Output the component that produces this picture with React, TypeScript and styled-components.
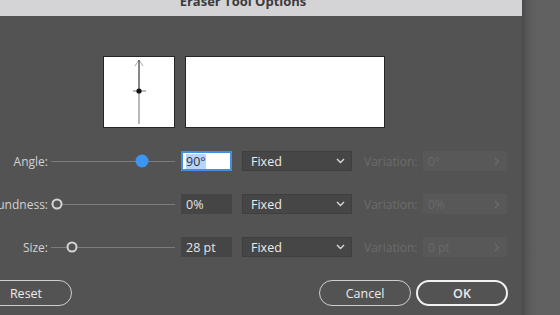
import React from 'react';
import styled, { createGlobalStyle } from 'styled-components';

const GlobalStyle = createGlobalStyle`
    html, body {
        margin: 0;
        padding: 0;
        width: 560px;
        height: 315px;
        overflow: hidden;
        background: #616161;
        font-family: "Open Sans", "Liberation Sans", sans-serif;
    }
`;

type SliderRow = {
    label: string;
    value: string;
    thumb: number;
    active?: boolean;
    variation: string;
};

const rows: SliderRow[] = [
    { label: 'Angle:', value: '90°', thumb: 91, active: true, variation: '0°' },
    { label: 'Roundness:', value: '0%', thumb: 6, variation: '0%' },
    { label: 'Size:', value: '28 pt', thumb: 21, variation: '0 pt' },
];

const BrushPreview = () => (
    <svg width="70" height="70" viewBox="0 0 70 70">
        <path d="M31 9 L35 3 L39 9" fill="none" stroke="#a8a8a8" strokeWidth="1" />
        <line x1="35" y1="3" x2="35" y2="34" stroke="#555" strokeWidth="1.4" />
        <line x1="35" y1="34" x2="35" y2="67" stroke="#8a8a8a" strokeWidth="1.2" />
        <line x1="29" y1="34" x2="42" y2="34" stroke="#777" strokeWidth="1" />
        <circle cx="35" cy="34" r="2.6" fill="#111" />
    </svg>
);

const Chevron = ({ color }: { color: string }) => (
    <svg width="9" height="6" viewBox="0 0 9 6">
        <path d="M1 1 L4.5 4.5 L8 1" fill="none" stroke={color} strokeWidth="1.4" />
    </svg>
);

const RightChevron = () => (
    <svg width="6" height="9" viewBox="0 0 6 9">
        <path d="M1 1 L4.5 4.5 L1 8" fill="none" stroke="#6c6c6c" strokeWidth="1.2" />
    </svg>
);

export default function App() {
    return (
        <>
            <GlobalStyle />
            <Screen>
                <Dialog>
                    <TitleBar>
                        <Title>Eraser Tool Options</Title>
                    </TitleBar>
                    <Body>
                        <PreviewRow>
                            <PreviewBox>
                                <BrushPreview />
                            </PreviewBox>
                            <StrokeBox />
                        </PreviewRow>
                        <Fields>
                            {rows.map((row) => (
                                <Row key={row.label}>
                                    <Label>{row.label}</Label>
                                    <Slider>
                                        <Track />
                                        <Thumb $active={row.active} style={{ left: row.thumb }} />
                                    </Slider>
                                    <ValueInput $focused={row.active}>
                                        <ValueText $selected={row.active}>{row.value}</ValueText>
                                    </ValueInput>
                                    <Select>
                                        <span>Fixed</span>
                                        <Chevron color="#d8d8d8" />
                                    </Select>
                                    <VariationLabel>Variation:</VariationLabel>
                                    <VariationInput>
                                        <span>{row.variation}</span>
                                        <RightChevron />
                                    </VariationInput>
                                </Row>
                            ))}
                        </Fields>
                        <Footer>
                            <Button>Reset</Button>
                            <ButtonGroup>
                                <Button>Cancel</Button>
                                <Button $primary>OK</Button>
                            </ButtonGroup>
                        </Footer>
                    </Body>
                </Dialog>
                <Backdrop />
            </Screen>
        </>
    );
}

const Screen = styled.div`
    display: flex;
    width: 560px;
    height: 315px;
    overflow: hidden;
`;

const Dialog = styled.div`
    flex: none;
    margin-left: -36px;
    width: 558px;
    height: 315px;
    display: flex;
    flex-direction: column;
    background: #535353;
`;

const Backdrop = styled.div`
    flex: 1;
    background: linear-gradient(to right, #4a4a4a 0px, #575757 5px, #5e5e5e 11px, #616161 16px);
`;

const TitleBar = styled.div`
    height: 16px;
    flex: none;
    overflow: hidden;
    background: #d4d3d6;
    display: flex;
    justify-content: center;
`;

const Title = styled.div`
    margin-top: -7px;
    font-size: 13px;
    line-height: 16px;
    font-weight: 700;
    color: #3c3c3c;
`;

const Body = styled.div`
    flex: 1;
    display: flex;
    flex-direction: column;
    padding-top: 40px;
`;

const PreviewRow = styled.div`
    display: flex;
    gap: 10px;
    margin-left: 139px;
`;

const PreviewBox = styled.div`
    width: 70px;
    height: 70px;
    background: #fff;
    border: 1px solid #262626;
    display: flex;
`;

const StrokeBox = styled.div`
    width: 198px;
    height: 70px;
    background: #fff;
    border: 1px solid #262626;
`;

const Fields = styled.div`
    display: flex;
    flex-direction: column;
    gap: 23px;
    margin-top: 23px;
`;

const Row = styled.div`
    display: flex;
    align-items: center;
    height: 20px;
`;

const Label = styled.div`
    width: 84px;
    text-align: right;
    white-space: nowrap;
    font-size: 12px;
    color: #d2d2d2;
`;

const Slider = styled.div`
    position: relative;
    width: 124px;
    height: 14px;
    margin-left: 3px;
    display: flex;
    align-items: center;
`;

const Track = styled.div`
    width: 100%;
    height: 1px;
    background: #7c7c7c;
`;

const Thumb = styled.div<{ $active?: boolean }>`
    position: absolute;
    top: 50%;
    width: ${(p) => (p.$active ? '13px' : '11px')};
    height: ${(p) => (p.$active ? '13px' : '11px')};
    box-sizing: border-box;
    border-radius: 50%;
    transform: translate(-50%, -50%);
    background: ${(p) => (p.$active ? '#3b96f3' : '#535353')};
    border: ${(p) => (p.$active ? 'none' : '2px solid #d4d4d4')};
`;

const ValueInput = styled.div<{ $focused?: boolean }>`
    box-sizing: border-box;
    width: 51px;
    height: 20px;
    margin-left: 6px;
    padding-left: ${(p) => (p.$focused ? '3px' : '5px')};
    display: flex;
    align-items: center;
    background: ${(p) => (p.$focused ? '#ffffff' : '#454545')};
    border: ${(p) => (p.$focused ? '2px solid #3f8fe6' : 'none')};
    font-size: 12.5px;
    color: #e4e4e4;
`;

const ValueText = styled.span<{ $selected?: boolean }>`
    line-height: 15px;
    color: ${(p) => (p.$selected ? '#333' : '#e4e4e4')};
    background: ${(p) => (p.$selected ? '#b4d5fe' : 'transparent')};
`;

const Select = styled.div`
    box-sizing: border-box;
    width: 110px;
    height: 20px;
    margin-left: 10px;
    padding: 0 6px 0 8px;
    display: flex;
    align-items: center;
    justify-content: space-between;
    background: #464646;
    border: 1px solid #3f3f3f;
    font-size: 12.5px;
    color: #ececec;
`;

const VariationLabel = styled.div`
    margin-left: 12px;
    width: 59px;
    font-size: 12px;
    color: #6c6c6c;
`;

const VariationInput = styled.div`
    box-sizing: border-box;
    width: 84px;
    height: 20px;
    padding: 0 7px 0 5px;
    display: flex;
    align-items: center;
    justify-content: space-between;
    background: #585858;
    font-size: 12px;
    color: #6a6a6a;
`;

const Footer = styled.div`
    display: flex;
    justify-content: space-between;
    padding: 0 14px 0 16px;
    margin-top: 23px;
`;

const ButtonGroup = styled.div`
    display: flex;
    gap: 5px;
`;

const Button = styled.button<{ $primary?: boolean }>`
    box-sizing: border-box;
    width: 92px;
    height: 26px;
    border-radius: 13px;
    background: transparent;
    border: ${(p) => (p.$primary ? '2px solid #f2f2f2' : '1px solid #cfcfcf')};
    color: #ececec;
    font-family: "Open Sans", "Liberation Sans", sans-serif;
    font-size: 12.5px;
    font-weight: ${(p) => (p.$primary ? 600 : 400)};
    padding: 0;
`;
